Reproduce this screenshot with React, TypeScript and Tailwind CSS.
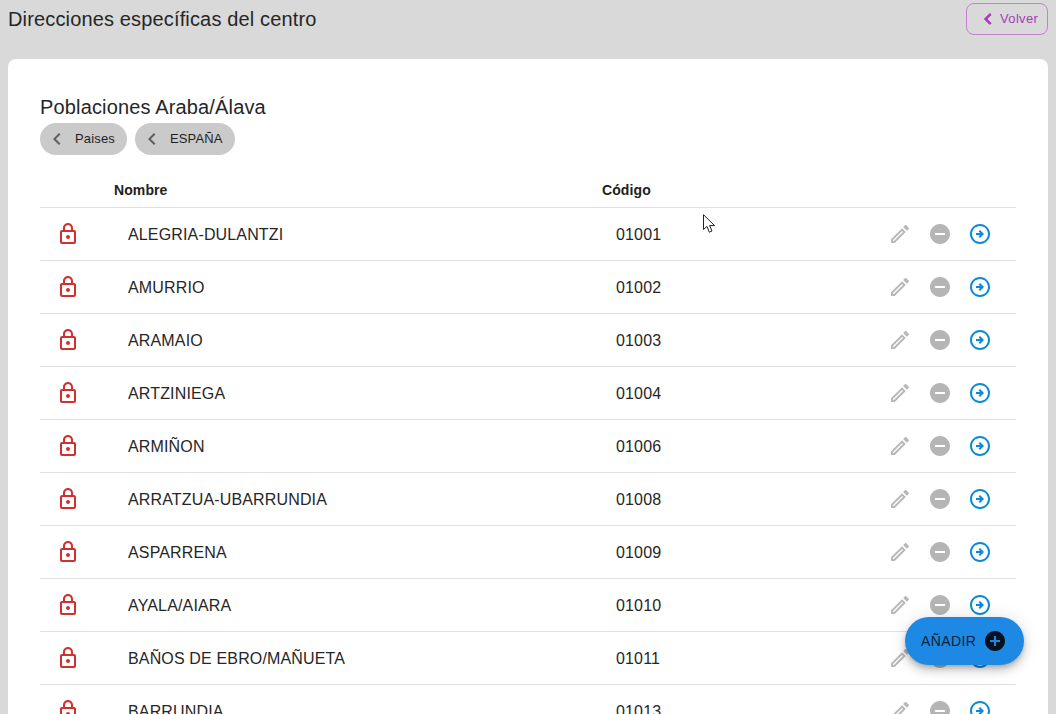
const rows = [
  ["ALEGRIA-DULANTZI", "01001"],
  ["AMURRIO", "01002"],
  ["ARAMAIO", "01003"],
  ["ARTZINIEGA", "01004"],
  ["ARMIÑON", "01006"],
  ["ARRATZUA-UBARRUNDIA", "01008"],
  ["ASPARRENA", "01009"],
  ["AYALA/AIARA", "01010"],
  ["BAÑOS DE EBRO/MAÑUETA", "01011"],
  ["BARRUNDIA", "01013"],
]

function Icon({ d, className }: { d: string; className?: string }) {
  return (
    <svg viewBox="0 0 24 24" fill="currentColor" className={className}>
      <path d={d} />
    </svg>
  )
}

const chevron = "M15.41 7.41 14 6l-6 6 6 6 1.41-1.41L10.83 12z"
const lock =
  "M18 8h-1V6c0-2.76-2.24-5-5-5S7 3.24 7 6v2H6c-1.1 0-2 .9-2 2v10c0 1.1.9 2 2 2h12c1.1 0 2-.9 2-2V10c0-1.1-.9-2-2-2zM9 6c0-1.66 1.34-3 3-3s3 1.34 3 3v2H9V6zm9 14H6V10h12v10zm-6-3c1.1 0 2-.9 2-2s-.9-2-2-2-2 .9-2 2 .9 2 2 2z"
const pencil =
  "M14.06 9.02l.92.92L5.92 19H5v-.92l9.06-9.06M17.66 3c-.25 0-.51.1-.7.29l-1.83 1.83 3.75 3.75 1.83-1.83c.39-.39.39-1.02 0-1.41l-2.34-2.34c-.2-.2-.45-.29-.71-.29zm-3.6 3.19L3 17.25V21h3.75L17.81 9.94l-3.75-3.75z"
const minus = "M12 2C6.48 2 2 6.48 2 12s4.48 10 10 10 10-4.48 10-10S17.52 2 12 2zm5 11H7v-2h10v2z"
const arrow =
  "M22 12c0-5.52-4.48-10-10-10S2 6.48 2 12c0 5.52 4.48 10 10 10S22 17.52 22 12zM4 12c0-4.42 3.58-8 8-8c4.42 0 8 3.58 8 8c0 4.42-3.58 8-8 8C7.58 20 4 16.42 4 12zM16 12l-4 4l-1.41-1.41L12.17 13H8v-2h4.17l-1.59-1.59L12 8L16 12z"
const plus = "M12 2C6.48 2 2 6.48 2 12s4.48 10 10 10 10-4.48 10-10S17.52 2 12 2zm5 11h-4v4h-2v-4H7v-2h4V7h2v4h4v2z"

function Crumb({ label }: { label: string }) {
  return (
    <div className="flex h-8 items-center rounded-full bg-[#cacaca] pl-[5px] pr-3 text-[13px] tracking-[0.15px] text-[#1f1f1f]">
      <Icon d={chevron} className="h-6 w-6 text-[#5f5f5f]" />
      <span className="ml-[6px]">{label}</span>
    </div>
  )
}

export default function App() {
  return (
    <div className="relative h-[714px] overflow-hidden bg-[#d9d9d9] font-['Liberation_Sans',sans-serif] text-[#262626]">
      <div className="flex items-start justify-between pl-2 pr-2 pt-[3px]">
        <h1 className="text-xl leading-8 tracking-[0.15px]">Direcciones específicas del centro</h1>
        <button className="flex h-8 w-[82px] items-center rounded-lg border border-[#c67ed3] pl-[10px] text-[13px] tracking-[0.35px] text-[#a63bb8]">
          <Icon d={chevron} className="h-[22px] w-[22px] stroke-current stroke-[1]" />
          <span className="ml-[1px]">Volver</span>
        </button>
      </div>

      <div className="mx-2 mt-6 rounded-lg bg-white px-8 pt-[36px]">
        <h2 className="mb-1 text-xl leading-6 tracking-[0.15px]">Poblaciones Araba/Álava</h2>
        <div className="flex gap-2">
          <Crumb label="Paises" />
          <Crumb label="ESPAÑA" />
        </div>

        <div className="mt-[19px] flex h-[34px] items-center border-b border-[#e0e0e0] pb-[1px] text-sm font-bold tracking-[0.1px] text-[#212121]">
          <span className="ml-[74px] w-[488px]">Nombre</span>
          <span>Código</span>
        </div>

        {rows.map(([name, code]) => (
          <div key={code} className="flex h-[53px] items-center border-b border-[#e0e0e0] text-base tracking-[0.15px]">
            <Icon d={lock} className="ml-4 h-6 w-6 text-[#d32f2f]" />
            <span className="ml-[48px] w-[488px] pt-[2px]">{name}</span>
            <span className="pt-[2px]">{code}</span>
            <div className="ml-auto mr-6 flex gap-4">
              <Icon d={pencil} className="h-6 w-6 text-[#b8b8b8]" />
              <Icon d={minus} className="h-6 w-6 text-[#b5b5b5]" />
              <Icon d={arrow} className="h-6 w-6 text-[#0a8ad6]" />
            </div>
          </div>
        ))}
      </div>

      <button className="absolute left-[905px] top-[617px] flex h-12 w-[119px] items-center rounded-full bg-[#1e88e5] pl-4 text-sm tracking-[0.4px] text-[#0d2238] shadow-[0_3px_5px_-1px_rgba(0,0,0,0.2),0_6px_10px_0_rgba(0,0,0,0.14),0_1px_18px_0_rgba(0,0,0,0.12)]">
        AÑADIR
        <Icon d={plus} className="ml-[7px] h-6 w-6 text-[#06121e]" />
      </button>

      <svg viewBox="0 0 14 20" className="absolute left-[703px] top-[214px] h-5 w-[14px]">
        <path d="M0.5 0.7V15.5L4 12.4L6.3 18.2L9 17L6.6 11.6H11.6Z" fill="white" stroke="#222" strokeWidth="1" />
      </svg>
    </div>
  )
}
